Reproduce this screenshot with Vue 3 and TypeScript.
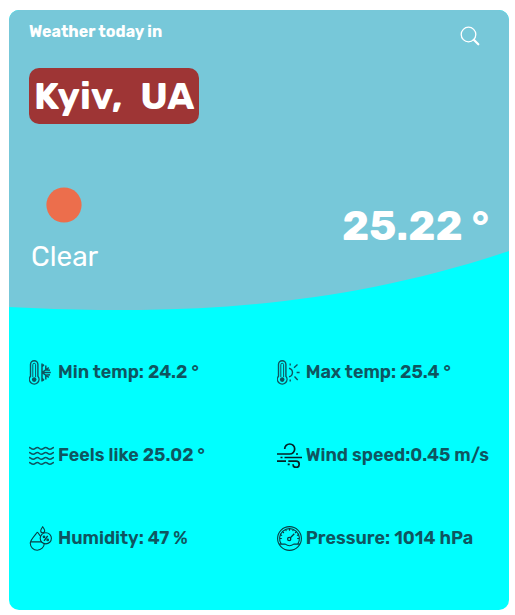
<script setup lang="ts">
interface Metric {
  icon: 'min' | 'max' | 'feels' | 'wind' | 'humidity' | 'pressure'
  text: string
}

const metrics: Metric[] = [
  { icon: 'min', text: 'Min temp: 24.2 °' },
  { icon: 'max', text: 'Max temp: 25.4 °' },
  { icon: 'feels', text: 'Feels like 25.02 °' },
  { icon: 'wind', text: 'Wind speed:0.45 m/s' },
  { icon: 'humidity', text: 'Humidity: 47 %' },
  { icon: 'pressure', text: 'Pressure: 1014 hPa' },
]
</script>

<template>
  <main class="page">
    <article class="card">
      <section class="hero">
        <svg class="wave" viewBox="0 0 500 60" preserveAspectRatio="none" aria-hidden="true">
          <path d="M0 57C170 66 330 58 500 1V60H0Z" fill="#0ff" />
        </svg>
        <header class="top">
          <h1 class="title">Weather today in</h1>
          <button class="search" type="button" aria-label="Search">
            <svg viewBox="0 0 20 20" fill="none" stroke="#fff">
              <circle cx="8.5" cy="8.5" r="7.3" stroke-width="1.3" />
              <path d="M13.8 13.8L18.3 18.3" stroke-width="2.2" stroke-linecap="round" />
            </svg>
          </button>
        </header>
        <h2 class="city"><span>Kyiv,</span><span>UA</span></h2>
        <div class="now">
          <div class="state">
            <svg class="sun" viewBox="0 0 36 36" aria-hidden="true">
              <circle cx="18" cy="18" r="17.6" fill="#ec6e4c" />
            </svg>
            <p class="sky">Clear</p>
          </div>
          <p class="temp">25.22 °</p>
        </div>
      </section>

      <ul class="metrics">
        <li v-for="m in metrics" :key="m.icon" class="metric">
          <svg class="icon" :class="m.icon" viewBox="0 0 25 25" aria-hidden="true">
            <template v-if="m.icon === 'min' || m.icon === 'max'">
              <path d="M1.5 16.2V4.4a3.7 3.7 0 0 1 7.4 0v11.8a4.8 4.8 0 1 1-7.4 0Z" />
              <path d="M3.8 17V4.7a1.4 1.4 0 0 1 2.8 0V17" stroke-width="1" />
              <circle class="solid" cx="5.2" cy="19.6" r="2.3" />
            </template>
            <g v-if="m.icon === 'min'" stroke-width="1.5">
              <path d="M13 3.5v18M13 12.5h8.8M13 12.5l6.8-4.8M13 12.5l6.8 4.8M16.8 5.6v4.2l4.2.4M16.8 19.4v-4.2l4.2-.4M13 6.6l2-2M13 18.4l2 2" />
            </g>
            <g v-if="m.icon === 'max'">
              <path d="M12 8.2a4.4 4.4 0 0 1 0 8.6M13.2 3.4v2.1M13.2 19.4v2.1M17 7.8l3.5-3.2M17.5 16.5l3.2 3.4M19.6 12.5h3" />
            </g>
            <g v-if="m.icon === 'feels'">
              <path
                v-for="y in [4, 9, 14, 19]"
                :key="y"
                :d="`M0 ${y + 0.5}c2 0 2 1.8 4.2 1.8s2.1-1.8 4.2-1.8s2 1.8 4.1 1.8s2.1-1.8 4.2-1.8s2 1.8 4.2 1.8s2.1-1.8 4.1-1.8`"
              />
            </g>
            <g v-if="m.icon === 'wind'" stroke-width="1.7">
              <path d="M0 11h12.7a5 5 0 1 0-5-5M19 11h2M3.5 14.5h2M7.5 14.5H25M0 18.2h9M11.3 18.2h7.8a3.1 3.1 0 1 1-3.1 3.1M10.7 21.3h2" />
            </g>
            <g v-if="m.icon === 'humidity'" stroke-width="1.1">
              <path d="M8.4 6C6.6 8.6 1.3 13.7 1.3 17.1a7 7 0 0 0 14 .2M8.4 6l3.2 4.3M1.3 15.9h11.5M13.7.8c-1.2 1.7-2 2.7-2 3.9a2 2 0 0 0 4 0c0-1.2-.8-2.2-2-3.9Z" />
              <circle cx="16.8" cy="12.3" r="5.6" />
              <path d="M15 14.9l3.7-5.1" stroke-width="1.4" />
              <circle cx="15" cy="10.8" r=".8" />
              <circle cx="18.7" cy="13.9" r=".8" />
            </g>
            <g v-if="m.icon === 'pressure'" stroke-width="1.1">
              <circle cx="12.5" cy="12.5" r="11.9" />
              <path d="M4.3 18.1a9.9 9.9 0 1 1 16.4 0M2 18.1h6.2q4.3 3.2 8.6 0h6.2" />
              <path d="M12.5 2.8v2M5.6 5.7l1.3 1.3M2.8 12.5h2M19.4 5.7l-1.3 1.3M22.2 12.5h-2M8.7 3.6l.6 1.5M16.3 3.6l-.6 1.5M3.6 8.8l1.5.6M21.4 8.8l-1.5.6" />
              <circle cx="12.2" cy="13" r="1.6" stroke-width="1.3" />
              <path d="M13.4 11.8L17.3 7.8" stroke-width="1.3" />
            </g>
          </svg>
          <span>{{ m.text }}</span>
        </li>
      </ul>
    </article>
  </main>
</template>

<style>
body {
  margin: 0;
  background: #fff;
}
</style>

<style scoped>
.page {
  padding: 10px 6px 5px 9px;
  font-family: Rubik, Roboto, "Liberation Sans", sans-serif;
}

.card {
  overflow: hidden;
  border-radius: 10px;
  background: #0ff;
}

.hero {
  position: relative;
  padding: 12px 20px 36px;
  background: #77c8d9;
  color: #fff;
}

.wave {
  position: absolute;
  left: 0;
  bottom: 0;
  display: block;
  width: 100%;
  height: 60px;
}

.top {
  display: flex;
  justify-content: space-between;
  align-items: flex-start;
}

.title {
  margin: 0;
  font-size: 16px;
  line-height: 20px;
  font-weight: 700;
}

.search {
  margin: 4px 9px 0 0;
  padding: 0;
  border: 0;
  background: none;
  cursor: pointer;
}

.search svg {
  display: block;
  width: 20px;
  height: 20px;
}

.city {
  display: flex;
  gap: 18px;
  width: fit-content;
  margin: 22px 0 0;
  padding: 0 5px;
  border-radius: 10px;
  background: #9e3535;
  font-size: 38px;
  line-height: 56px;
  font-weight: 700;
}

.now {
  position: relative;
  display: flex;
  justify-content: space-between;
  align-items: flex-end;
  margin-top: 63px;
}

.sun {
  display: block;
  width: 36px;
  height: 36px;
  margin-left: 17px;
}

.sky {
  margin: 17px 0 0 2px;
  font-size: 28px;
  line-height: 34px;
}

.temp {
  margin: 0 0 22px;
  font-size: 42px;
  line-height: 52px;
  font-weight: 700;
}

.metrics {
  display: grid;
  grid-template-columns: minmax(0, 7fr) minmax(0, 6fr);
  row-gap: 58px;
  margin: 0;
  padding: 50px 20px 59px;
  list-style: none;
}

.metric {
  display: flex;
  align-items: center;
  gap: 4px;
  color: #0f5560;
  font-size: 18px;
  line-height: 25px;
  font-weight: 600;
  white-space: nowrap;
}

.icon {
  flex: none;
  width: 25px;
  height: 25px;
  fill: none;
  stroke: #0f5560;
  stroke-width: 1.4;
}

.icon .solid {
  fill: #0f5560;
  stroke: none;
}

.icon.wind {
  stroke: #062025;
}

.icon.humidity,
.icon.pressure {
  stroke: #083f45;
}
</style>
